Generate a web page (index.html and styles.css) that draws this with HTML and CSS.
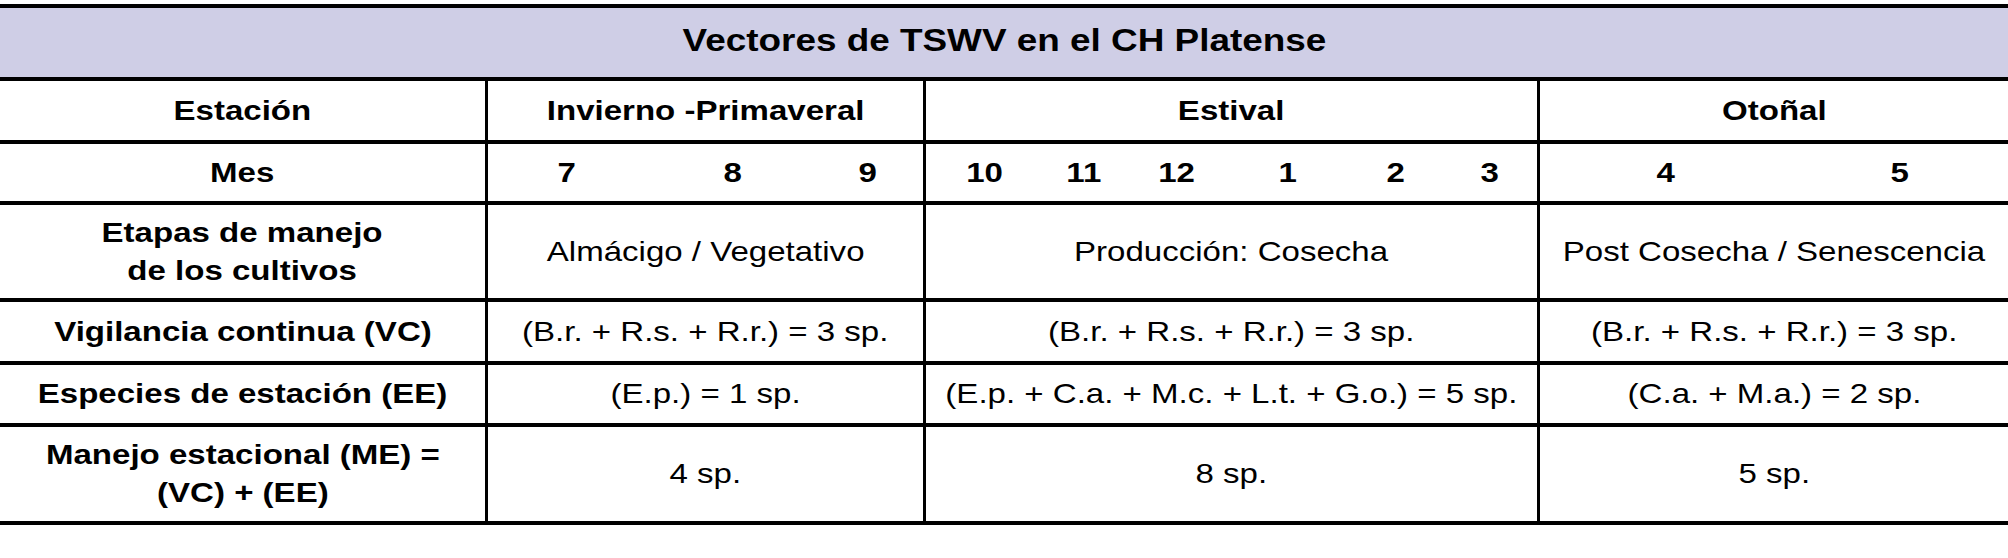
FILE: index.html
```html
<!DOCTYPE html>
<html lang="es">
<head>
<meta charset="utf-8">
<title>Vectores de TSWV en el CH Platense</title>
<link rel="stylesheet" href="styles.css">
</head>
<body>
<div class="tbl">
  <div class="title"><span class="t tt">Vectores de TSWV en el CH Platense</span></div>

  <div class="row r1">
    <div class="cell b"><span class="t">Estación</span></div>
    <div class="cell b"><span class="t">Invierno -Primaveral</span></div>
    <div class="cell b"><span class="t">Estival</span></div>
    <div class="cell b last"><span class="t">Otoñal</span></div>
  </div>

  <div class="row r2">
    <div class="cell b"><span class="t">Mes</span></div>
    <div class="cell b months m-inv"><span class="t">7</span><span class="t">8</span><span class="t">9</span></div>
    <div class="cell b months m-est"><span class="t">10</span><span class="t">11</span><span class="t">12</span><span class="t">1</span><span class="t">2</span><span class="t">3</span></div>
    <div class="cell b months m-oto last"><span class="t">4</span><span class="t">5</span></div>
  </div>

  <div class="row r3">
    <div class="cell b"><span class="t">Etapas de manejo<br>de los cultivos</span></div>
    <div class="cell"><span class="t">Almácigo / Vegetativo</span></div>
    <div class="cell"><span class="t">Producción: Cosecha</span></div>
    <div class="cell last"><span class="t">Post Cosecha / Senescencia</span></div>
  </div>

  <div class="row r4">
    <div class="cell b"><span class="t">Vigilancia continua (VC)</span></div>
    <div class="cell"><span class="t">(B.r. + R.s. + R.r.) = 3 sp.</span></div>
    <div class="cell"><span class="t">(B.r. + R.s. + R.r.) = 3 sp.</span></div>
    <div class="cell last"><span class="t">(B.r. + R.s. + R.r.) = 3 sp.</span></div>
  </div>

  <div class="row r5">
    <div class="cell b"><span class="t">Especies de estación (EE)</span></div>
    <div class="cell"><span class="t">(E.p.) = 1 sp.</span></div>
    <div class="cell"><span class="t">(E.p. + C.a. + M.c. + L.t. + G.o.) = 5 sp.</span></div>
    <div class="cell last"><span class="t">(C.a. + M.a.) = 2 sp.</span></div>
  </div>

  <div class="row r6">
    <div class="cell b"><span class="t">Manejo estacional (ME) =<br>(VC) + (EE)</span></div>
    <div class="cell"><span class="t">4 sp.</span></div>
    <div class="cell"><span class="t">8 sp.</span></div>
    <div class="cell last"><span class="t">5 sp.</span></div>
  </div>
</div>
</body>
</html>
```

FILE: styles.css
```css
* { box-sizing: border-box; }

html, body {
  margin: 0;
  padding: 0;
  background: #ffffff;
}

body {
  width: 2008px;
  height: 558px;
  overflow: hidden;
  font-family: "Liberation Sans", Arial, sans-serif;
  color: #000000;
}

.tbl {
  margin-top: 4px;
  width: 2008px;
  border-top: 4px solid #000;
}

.title {
  height: 73px;
  background: #cfcee6;
  border-bottom: 4px solid #000;
  display: flex;
  align-items: center;
  justify-content: center;
  padding-bottom: 4px;
}

.t {
  display: inline-block;
  transform: scaleX(1.18);
  line-height: 38px;
  white-space: nowrap;
}

.tt {
  font-size: 31px;
  font-weight: bold;
  transform: scaleX(1.19);
}

.row {
  display: grid;
  grid-template-columns: 488px 438px 614px 1fr;
  border-bottom: 4px solid #000;
  font-size: 28px;
}

.r1 { height: 63px; }
.r2 { height: 61px; }
.r3 { height: 97px; }
.r4 { height: 63px; }
.r5 { height: 62px; }
.r6 { height: 98px; }

.cell {
  border-right: 3px solid #000;
  display: flex;
  align-items: center;
  justify-content: center;
  text-align: center;
}

.cell.last { border-right: 0; }

.b { font-weight: bold; }

.months {
  display: grid;
  align-items: center;
  justify-items: center;
}

.m-inv { grid-template-columns: 158px 174px 96px 1fr; }
.m-est { grid-template-columns: 118px 80px 106px 116px 100px 88px 1fr; }
.m-oto { grid-template-columns: 252px 216px; }
```
